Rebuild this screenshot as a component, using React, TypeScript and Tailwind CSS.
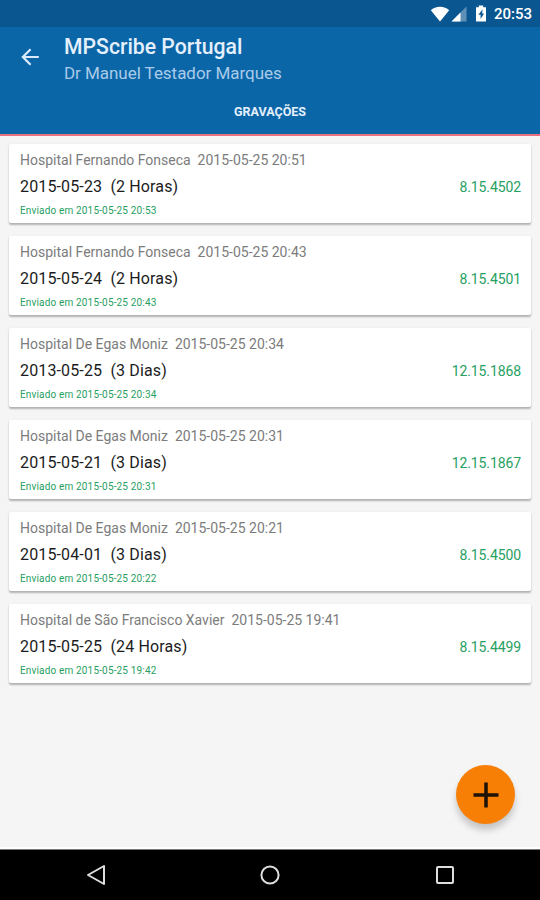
import React from 'react';

interface Recording {
  place: string;
  createdAt: string;
  date: string;
  duration: string;
  sentAt: string;
  code: string;
}

const recordings: Recording[] = [
  { place: 'Hospital Fernando Fonseca', createdAt: '2015-05-25 20:51', date: '2015-05-23', duration: '(2 Horas)', sentAt: '2015-05-25 20:53', code: '8.15.4502' },
  { place: 'Hospital Fernando Fonseca', createdAt: '2015-05-25 20:43', date: '2015-05-24', duration: '(2 Horas)', sentAt: '2015-05-25 20:43', code: '8.15.4501' },
  { place: 'Hospital De Egas Moniz', createdAt: '2015-05-25 20:34', date: '2013-05-25', duration: '(3 Dias)', sentAt: '2015-05-25 20:34', code: '12.15.1868' },
  { place: 'Hospital De Egas Moniz', createdAt: '2015-05-25 20:31', date: '2015-05-21', duration: '(3 Dias)', sentAt: '2015-05-25 20:31', code: '12.15.1867' },
  { place: 'Hospital De Egas Moniz', createdAt: '2015-05-25 20:21', date: '2015-04-01', duration: '(3 Dias)', sentAt: '2015-05-25 20:22', code: '8.15.4500' },
  { place: 'Hospital de São Francisco Xavier', createdAt: '2015-05-25 19:41', date: '2015-05-25', duration: '(24 Horas)', sentAt: '2015-05-25 19:42', code: '8.15.4499' },
];

function StatusBar() {
  return (
    <div className="h-[27px] shrink-0 bg-[#0a5690] flex items-center justify-end pr-2 text-white">
      <svg width="20" height="16" viewBox="0 0 20 16" fill="currentColor">
        <path d="M10 15.5 0.8 4.2C3.2 2 6.4 0.8 10 0.8s6.8 1.2 9.2 3.4z" />
      </svg>
      <svg className="ml-px" width="16" height="16" viewBox="0 0 16 16" fill="currentColor">
        <path d="M0.5 15.5 15.500 0.5v15z" opacity="0.35" />
        <path d="M0.5 15.5 9.500 6.5v9z" />
      </svg>
      <svg className="ml-2" width="12" height="17" viewBox="0 0 12 17">
        <path d="M3.8 0.5h4.4v1.7H11v14.3H1V2.2h2.8z" fill="currentColor" />
        <path d="M7.6 4.3 3.4 9.8h2.2v4.2l3.5-5.6H7.1z" fill="#0a5690" />
      </svg>
      <span className="ml-[7px] pt-0.5 text-[15px] leading-none font-medium">20:53</span>
    </div>
  );
}

function Header() {
  return (
    <header className="h-[109px] shrink-0 bg-[#0b66a8] border-b-2 border-[#e86f7d] flex flex-col">
      <div className="flex pl-[21px]">
        <button aria-label="Voltar" className="mt-[21px] h-[18px] w-[18px] text-[#dcebfa]">
          <svg width="18" height="18" viewBox="0 0 18 18" fill="none" stroke="currentColor" strokeWidth="2.2">
            <path d="M17.8 9H2M9.6 1.2 1.8 9l7.8 7.8" />
          </svg>
        </button>
        <div className="ml-[25px] pt-2">
          <h1 className="text-[21.2px] leading-6 font-medium text-[#e4f0fc] whitespace-nowrap">MPScribe Portugal</h1>
          <p className="mt-[3px] text-[17px] leading-[22px] tracking-[-0.04px] text-[#a9cbe9] whitespace-nowrap">Dr Manuel Testador Marques</p>
        </div>
      </div>
      <div className="mt-[19px] text-center text-[12.5px] leading-[18px] font-bold text-[#e4f0fc]">GRAVAÇÕES</div>
    </header>
  );
}

function RecordingCard({ item }: { item: Recording }) {
  return (
    <li className="h-[79px] bg-white rounded-[2px] shadow-[0_1.5px_2px_rgba(0,0,0,0.28)] flex items-center justify-between pl-[11px] pr-2.5">
      <div className="self-start pt-[7px] whitespace-pre">
        <p className="text-[14px] leading-[18px] text-[#7c7c7c]">{item.place}  {item.createdAt}</p>
        <p className="mt-2 text-[16px] leading-5 tracking-[0.14px] text-[#1c1c1c]">{item.date}  {item.duration}</p>
        <p className="mt-[7px] text-[10px] leading-[14px] tracking-[0.16px] text-[#27a062]">Enviado em {item.sentAt}</p>
      </div>
      <span className="pt-2 text-[14px] leading-[18px] tracking-[-0.1px] text-[#27a062]">{item.code}</span>
    </li>
  );
}

function NavBar() {
  return (
    <nav className="h-[51px] shrink-0 bg-black border-t border-[#777777] grid grid-cols-[191px_158px_191px] items-center text-[#dedede]">
      <svg className="justify-self-center" width="20" height="22" viewBox="0 0 20 22" fill="none" stroke="currentColor" strokeWidth="2" strokeLinejoin="round">
        <path d="M18 2v18L2 11z" />
      </svg>
      <svg className="justify-self-center" width="20" height="20" viewBox="0 0 20 20" fill="none" stroke="currentColor" strokeWidth="2">
        <circle cx="10" cy="10" r="8.6" />
      </svg>
      <svg className="justify-self-center" width="18" height="18" viewBox="0 0 18 18" fill="none" stroke="currentColor" strokeWidth="2">
        <rect x="1" y="1" width="16" height="16" rx="1" />
      </svg>
    </nav>
  );
}

export default function App() {
  return (
    <div className="relative w-[540px] h-[900px] flex flex-col overflow-hidden bg-[#f5f5f5] font-['Roboto','Liberation_Sans',sans-serif]">
      <StatusBar />
      <Header />
      <main className="flex-1 min-h-0 pt-[7.5px] px-[9px] border-b-2 border-white">
        <ul className="flex flex-col gap-[13.1px]">
          {recordings.map((item) => (
            <RecordingCard key={item.code} item={item} />
          ))}
        </ul>
      </main>
      <NavBar />

      {/* Floating action button */}
      <button aria-label="Nova gravação" className="absolute left-[456px] top-[765px] w-[59px] h-[59px] rounded-full bg-[#f77f05] shadow-[0_6px_7px_rgba(0,0,0,0.2)] flex items-center justify-center">
        <svg width="26" height="26" viewBox="0 0 26 26" fill="none" stroke="#1d1206" strokeWidth="3.5">
          <path d="M13 0.5v25M0.5 13h25" />
        </svg>
      </button>
    </div>
  );
}
